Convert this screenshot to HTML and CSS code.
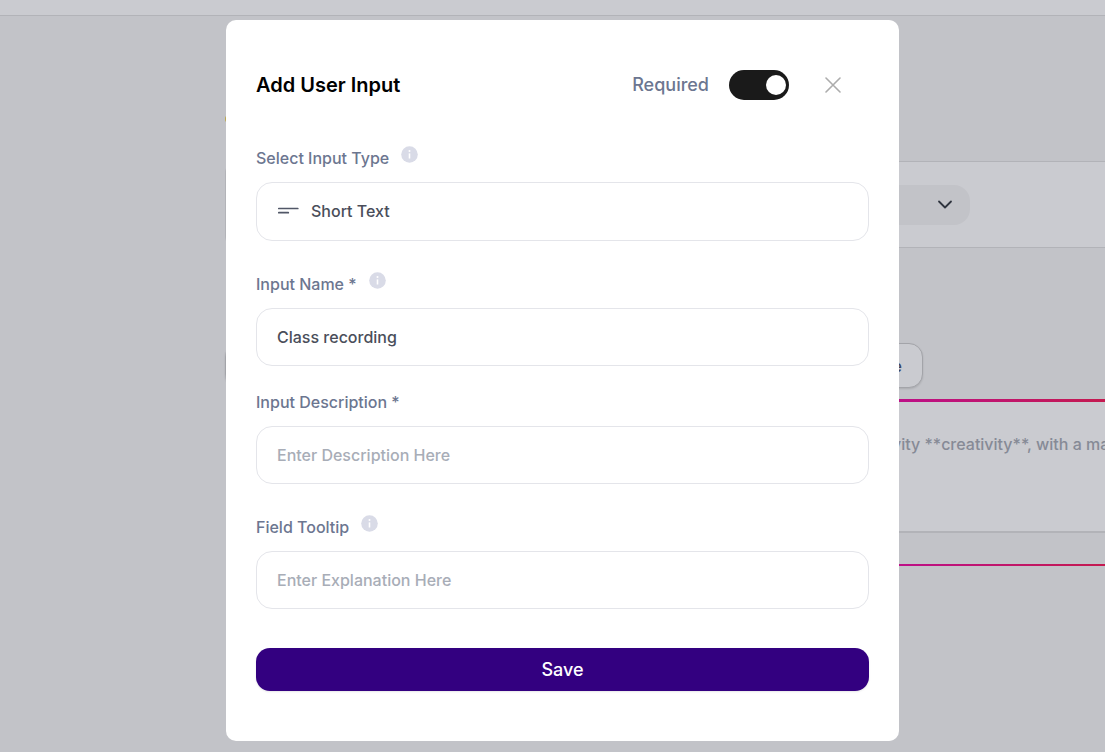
FILE: index.html
```html
<!DOCTYPE html>
<html lang="en">
<head>
    <meta charset="UTF-8">
    <meta name="viewport" content="width=device-width, initial-scale=1.0">
    <title>Add User Input</title>
    <link rel="stylesheet" href="styles.css">
</head>
<body>
    <div class="page">
        <header class="topbar"></header>
        <main class="main">
            <div class="heading"><span class="dot"></span></div>
            <div class="toolbar">
                <button class="picker" type="button" aria-label="Choose option">
                    <svg width="16" height="16" viewBox="0 0 16 16" fill="none" stroke="#2f343f" stroke-width="1.8" stroke-linecap="round" stroke-linejoin="round"><path d="M2 4.5l6 6 6-6"/></svg>
                </button>
            </div>
            <button class="insert" type="button">e</button>
            <section class="editor">
                <div class="prompt">
                    <p>vity **creativity**, with a ma</p>
                </div>
            </section>
        </main>
    </div>

    <div class="overlay">
        <form class="modal" role="dialog" aria-labelledby="modal-title">
            <div class="modal-header">
                <h2 id="modal-title">Add User Input</h2>
                <label class="required" for="required">Required</label>
                <input class="toggle" type="checkbox" id="required" checked>
                <button class="close" type="button" aria-label="Close">
                    <svg width="16" height="16" viewBox="0 0 16 16" fill="none" stroke="#acacac" stroke-width="1.6" stroke-linecap="round"><path d="M1 1l14 14M15 1L1 15"/></svg>
                </button>
            </div>

            <div class="field">
                <div class="label-row has-info">
                    <label for="type">Select Input Type</label>
                    <svg class="info" viewBox="0 0 17 17"><circle cx="8.5" cy="8.5" r="8.3" fill="#d9dbe7"/><circle cx="8.5" cy="4.9" r="1" fill="#fff"/><path d="M8.5 7.4v5.1" stroke="#fff" stroke-width="1.6"/></svg>
                </div>
                <div class="control select-box">
                    <svg width="22" height="10" viewBox="0 0 22 10" fill="none" stroke="#515767" stroke-width="1.7" stroke-linecap="round"><path d="M1.8 2.5h19M1.8 6.7h9.5"/></svg>
                    <select id="type">
                        <option>Short Text</option>
                    </select>
                </div>
            </div>

            <div class="field">
                <div class="label-row has-info">
                    <label for="name">Input Name *</label>
                    <svg class="info" viewBox="0 0 17 17"><circle cx="8.5" cy="8.5" r="8.3" fill="#d9dbe7"/><circle cx="8.5" cy="4.9" r="1" fill="#fff"/><path d="M8.5 7.4v5.1" stroke="#fff" stroke-width="1.6"/></svg>
                </div>
                <input class="control" type="text" id="name" value="Class recording">
            </div>

            <div class="field">
                <div class="label-row">
                    <label for="description">Input Description *</label>
                </div>
                <input class="control" type="text" id="description" placeholder="Enter Description Here">
            </div>

            <div class="field">
                <div class="label-row has-info">
                    <label for="tooltip">Field Tooltip</label>
                    <svg class="info" viewBox="0 0 17 17"><circle cx="8.5" cy="8.5" r="8.3" fill="#d9dbe7"/><circle cx="8.5" cy="4.9" r="1" fill="#fff"/><path d="M8.5 7.4v5.1" stroke="#fff" stroke-width="1.6"/></svg>
                </div>
                <input class="control" type="text" id="tooltip" placeholder="Enter Explanation Here">
            </div>

            <button class="save" type="submit">Save</button>
        </form>
    </div>
</body>
</html>
```
FILE: styles.css
```css
:root {
    --backdrop: #c2c3c8;
    --surface: #cacbd0;
    --line: #b2b3b8;
    --label: #6c7690;
    --text: #4a4e5a;
    --placeholder: #a8adb7;
    --border: #e4e5ea;
    --primary: #330080;
}

* {
    box-sizing: border-box;
    margin: 0;
}

body {
    font-family: Inter, "Liberation Sans", sans-serif;
    font-size: 16px;
    font-weight: 500;
    line-height: 20px;
    background: var(--backdrop);
    overflow: hidden;
}

button,
input,
select {
    font: inherit;
    color: inherit;
}

/* page behind the dialog */
.page {
    min-height: 100vh;
}

.topbar {
    height: 16px;
    background: var(--surface);
    border-bottom: 1px solid var(--line);
}

.main {
    padding-left: 225px;
}

.heading {
    height: 145px;
    padding-top: 99px;
}

.dot {
    display: block;
    width: 8px;
    height: 8px;
    border-radius: 50%;
    background: #b9a54a;
}

.toolbar {
    padding: 23px 24px 22px;
    background: var(--surface);
    border: 1px solid var(--line);
    border-right: 0;
    border-radius: 12px 0 0 12px;
}

.picker {
    display: flex;
    align-items: center;
    justify-content: flex-end;
    width: 720px;
    height: 40px;
    padding: 0 17px;
    border: 0;
    border-radius: 16px;
    background: var(--backdrop);
}

.insert {
    display: block;
    width: 698px;
    height: 45px;
    margin: 95px 0 11px;
    padding: 0 20px;
    text-align: right;
    color: #3b4560;
    background: var(--surface);
    border: 1px solid #a3a4a9;
    border-radius: 14px;
    box-shadow: 0 1px 2px rgba(0, 0, 0, 0.12);
}

.editor {
    margin-left: 5px;
    padding-bottom: 31px;
    border-top: 3px solid;
    border-bottom: 2px solid;
    border-image: linear-gradient(90deg, #a400c8, #bd1086 77%, #c41a50) 3 0 2 0;
}

.prompt {
    height: 131px;
    padding: 32px 0 0 662px;
    background: var(--surface);
    border-bottom: 2px solid var(--line);
    color: #868a96;
    white-space: nowrap;
}

/* dialog */
.overlay {
    position: fixed;
    inset: 0;
    display: flex;
    align-items: flex-start;
    justify-content: center;
    padding: 20px 0 0 20px;
}

.modal {
    width: 100%;
    max-width: 673px;
    padding: 50px 30px;
    background: white;
    border-radius: 10px;
}

.modal-header {
    display: flex;
    align-items: center;
    margin-bottom: 41px;
    padding-right: 21px;
}

.modal-header h2 {
    flex: 1;
    font-size: 20px;
    font-weight: 600;
    color: black;
}

.required {
    font-size: 18px;
    color: var(--label);
}

.toggle {
    appearance: none;
    display: flex;
    align-items: center;
    width: 60px;
    height: 30px;
    margin: 0 29px 0 20px;
    padding: 3px;
    border-radius: 15px;
    background: #9a9a9a;
}

.toggle::before {
    content: '';
    width: 20px;
    height: 20px;
    border-radius: 50%;
    background: white;
}

.toggle:checked {
    justify-content: flex-end;
    background: #1a1a1a;
}

.close {
    display: flex;
    align-items: center;
    justify-content: center;
    width: 30px;
    height: 30px;
    padding: 0;
    border: 0;
    background: none;
}

.field + .field {
    margin-top: 26px;
}

.label-row {
    display: flex;
    gap: 12px;
    margin-bottom: 14px;
    color: var(--label);
}

.has-info {
    align-items: center;
    height: 27px;
}

.has-info label {
    align-self: flex-end;
}

.info {
    width: 17px;
    height: 17px;
}

.control {
    display: block;
    width: 100%;
    height: 58px;
    padding: 0 20px 1px;
    color: var(--text);
    background: white;
    border: 1px solid var(--border);
    border-radius: 16px;
}

.control::placeholder {
    color: var(--placeholder);
}

.select-box {
    display: flex;
    align-items: center;
    gap: 12px;
    height: 59px;
}

.select-box select {
    flex: 1;
    appearance: none;
    padding: 0;
    border: 0;
    background: none;
}

.save {
    display: block;
    width: 100%;
    height: 43px;
    margin-top: 39px;
    font-size: 18px;
    color: white;
    background: var(--primary);
    border: 0;
    border-radius: 14px;
    box-shadow: 0 1px 2px rgba(16, 24, 40, 0.1);
}
```
